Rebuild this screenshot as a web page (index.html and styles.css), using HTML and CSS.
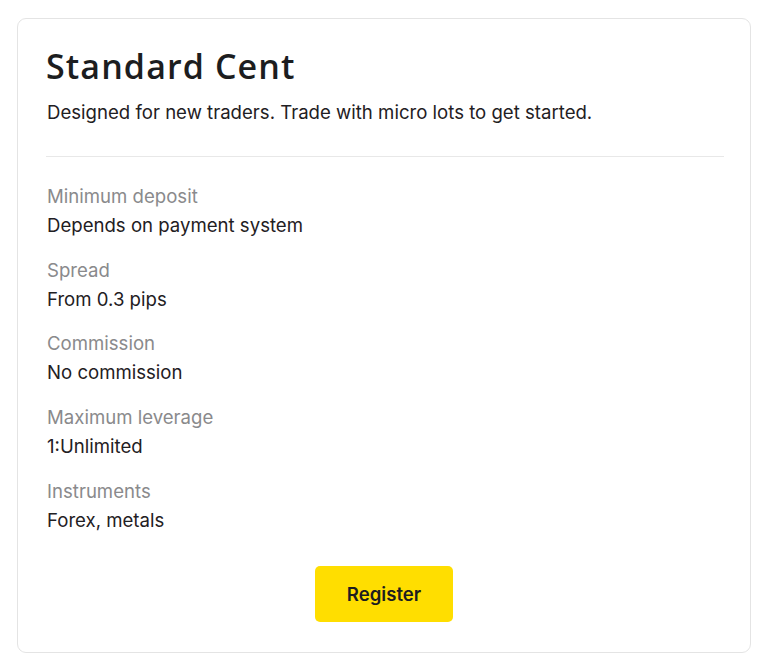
FILE: index.html
```html
<!DOCTYPE html>
<html>
<head>
<meta charset="utf-8">
<link rel="stylesheet" href="styles.css">
</head>
<body>
<div class="card">
  <h1 class="title">Standard Cent</h1>
  <p class="desc">Designed for new traders. Trade with micro lots to get started.</p>
  <div class="divider"></div>
  <dl class="specs">
    <div class="spec"><dt>Minimum deposit</dt><dd>Depends on payment system</dd></div>
    <div class="spec"><dt>Spread</dt><dd>From 0.3 pips</dd></div>
    <div class="spec"><dt>Commission</dt><dd>No commission</dd></div>
    <div class="spec"><dt>Maximum leverage</dt><dd>1:Unlimited</dd></div>
    <div class="spec"><dt>Instruments</dt><dd>Forex, metals</dd></div>
  </dl>
  <div class="actions"><button class="btn">Register</button></div>
</div>
</body>
</html>
```
FILE: styles.css
```css
html, body {
  margin: 0;
  padding: 0;
  background: #ffffff;
}
body {
  padding: 18px 0 0 17px;
  font-family: Inter, "Noto Sans", sans-serif;
  color: #1f2023;
}
.card {
  box-sizing: border-box;
  width: 734px;
  height: 635px;
  border: 1px solid #e4e4e4;
  border-radius: 9px;
  padding: 25px 26px 0 28px;
}
.title {
  margin: 0;
  font-family: "Open Sans", sans-serif;
  font-weight: 600;
  font-size: 34px;
  line-height: 44px;
  letter-spacing: 1.1px;
  color: #1c1d20;
}
.desc {
  margin: 12px 0 0 1px;
  font-size: 18.6px;
  line-height: 24px;
}
.divider {
  height: 1px;
  background: #e8e8e8;
  margin: 32px 0 0 0;
}
.specs {
  margin: 27px 0 0 1px;
  display: flex;
  flex-direction: column;
  gap: 20.7px;
}
.spec dt {
  font-size: 18.6px;
  line-height: 24px;
  color: #8a8a8c;
}
.spec dd {
  margin: 5px 0 0 0;
  font-size: 18.6px;
  line-height: 24px;
}
.actions {
  display: flex;
  justify-content: center;
  margin-top: 34px;
  padding-right: 2px;
}
.btn {
  width: 138px;
  height: 56px;
  border: none;
  border-radius: 5px;
  background: #ffde00;
  font-family: Inter, sans-serif;
  font-weight: 600;
  font-size: 18.6px;
  color: #1c1d20;
}
```
